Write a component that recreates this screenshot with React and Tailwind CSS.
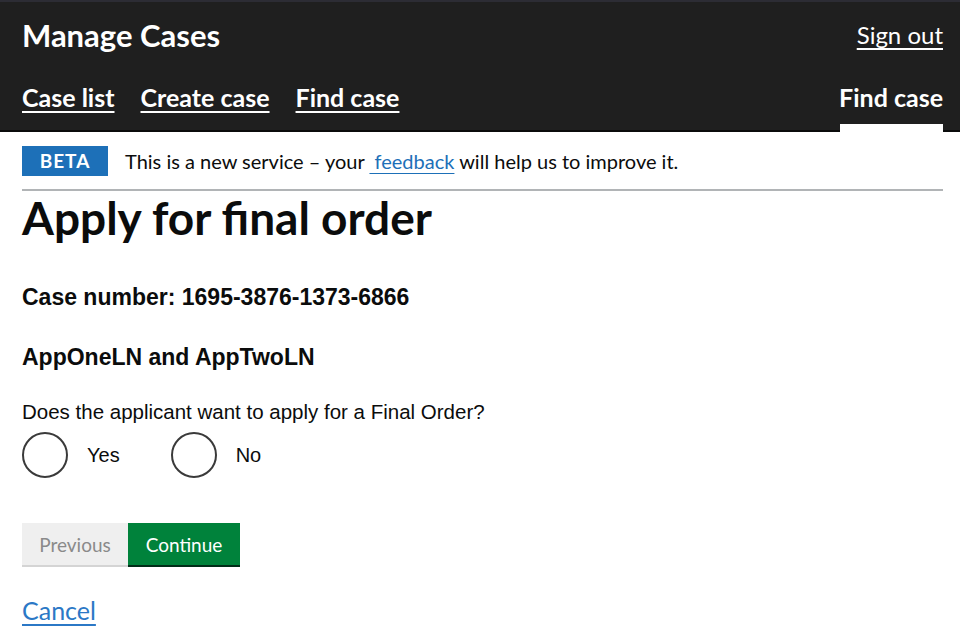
import React from 'react'

const gds = { fontFamily: 'Lato, "Noto Sans", Arial, sans-serif' }
const arial = { fontFamily: '"Liberation Sans", Arial, sans-serif' }

function Radio({ label, className = '' }) {
  return (
    <label className={`flex items-center ${className}`}>
      <span className="block h-[46px] w-[46px] rounded-full border-2 border-[#3a3a3a] bg-white" />
      <span className="ml-[19px] text-[20px] text-[#0b0c0c]">{label}</span>
    </label>
  )
}

export default function App() {
  return (
    <div className="min-h-[640px] w-[960px] bg-white text-[#0b0c0c]">
      <header className="relative h-[132px] bg-[#1f1f1f] border-t-2 border-[#2c2c34]" style={gds}>
        <div className="flex h-[50px] items-end justify-between pl-[22px] pr-[17px]">
          <span className="text-[31px] font-bold leading-[34px] text-white">Manage Cases</span>
          <a href="#" className="text-[24px] leading-[34px] text-white underline decoration-2 underline-offset-[4px]">Sign out</a>
        </div>
        <nav className="flex h-[60px] items-end justify-between pl-[22px] pr-[17px]">
          <div className="flex gap-[26px]">
            <a href="#" className="text-[25px] font-bold leading-[30px] text-white underline decoration-2 underline-offset-[4px]">Case list</a>
            <a href="#" className="text-[25px] font-bold leading-[30px] text-white underline decoration-2 underline-offset-[4px]">Create case</a>
            <a href="#" className="text-[25px] font-bold leading-[30px] text-white underline decoration-2 underline-offset-[4px]">Find case</a>
          </div>
          <span className="text-[25px] font-bold leading-[30px] text-white">Find case</span>
        </nav>
        <div className="absolute bottom-0 left-0 right-0 h-[2px] bg-[#0b0c0c]" />
        <div className="absolute bottom-0 right-[17px] h-[8px] w-[103px] bg-white" />
      </header>

      <main className="pl-[22px] pr-[17px]">
        <div className="flex items-center border-b-2 border-[#b1b4b6] pb-[13px] pt-[14px]" style={gds}>
          <span className="flex h-[30px] w-[86px] items-center justify-center bg-[#1d70b8] text-[19px] font-bold tracking-[1px] text-white">BETA</span>
          <span className="ml-[17px] whitespace-pre text-[20px] text-[#0b0c0c]">
            {'This is a new service – your '}
            <a href="#" className="text-[#1d70b8] underline decoration-1 underline-offset-[4px]">{' feedback'}</a>
            {' will help us to improve it.'}
          </span>
        </div>

        <h1 className="text-[46px] font-bold leading-[54px]" style={gds}>Apply for final order</h1>

        <div style={arial}>
          <p className="mt-[39px] text-[23px] font-bold leading-[26px]">Case number: 1695-3876-1373-6866</p>
          <p className="mt-[34px] text-[23px] font-bold leading-[26px]">AppOneLN and AppTwoLN</p>
          <p className="mt-[30px] text-[20.5px] leading-[24px]">Does the applicant want to apply for a Final Order?</p>
          <div className="mt-[8px] flex">
            <Radio label="Yes" />
            <Radio label="No" className="ml-[51px]" />
          </div>
        </div>

        <div className="mt-[45px] flex" style={gds}>
          <button className="h-[44px] w-[106px] border-b-2 border-[#d4d4d4] bg-[#efefef] pt-[3px] text-[19px] text-[#8a8a8a]">Previous</button>
          <button className="h-[44px] w-[112px] border-b-2 border-[#002d18] bg-[#00823b] pt-[3px] text-[19px] text-white">Continue</button>
        </div>

        <a href="#" className="mt-[28px] inline-block text-[25px] leading-[30px] text-[#2b78c6] underline decoration-2 underline-offset-[4px]" style={gds}>Cancel</a>
      </main>
    </div>
  )
}
